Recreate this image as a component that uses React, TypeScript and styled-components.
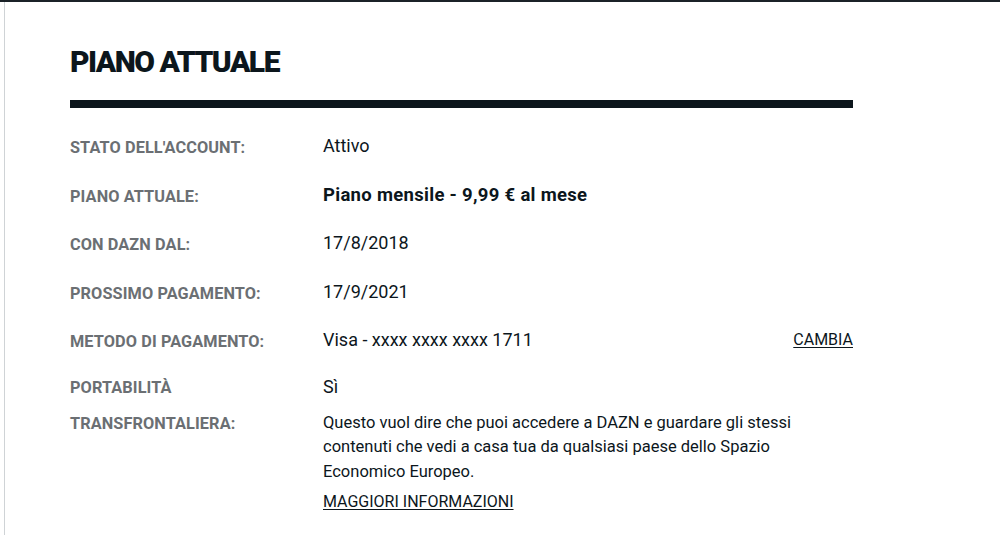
import styled, { createGlobalStyle } from 'styled-components'

const GlobalStyle = createGlobalStyle`
  html, body {
    margin: 0;
    padding: 0;
    background: #ffffff;
  }
  body {
    font-family: Roboto, 'Liberation Sans', sans-serif;
    color: #0c161c;
  }
`

interface Row {
  label: string
  value: string
  strong?: boolean
  action?: string
}

const rows: Row[] = [
  { label: "STATO DELL'ACCOUNT:", value: 'Attivo' },
  { label: 'PIANO ATTUALE:', value: 'Piano mensile - 9,99 € al mese', strong: true },
  { label: 'CON DAZN DAL:', value: '17/8/2018' },
  { label: 'PROSSIMO PAGAMENTO:', value: '17/9/2021' },
  { label: 'METODO DI PAGAMENTO:', value: 'Visa - xxxx xxxx xxxx 1711', action: 'CAMBIA' }
]

const App: React.FC = () => {
  return (
    <>
      <GlobalStyle />
      <Page>
        <Frame>
          <Section>
            <Title>PIANO ATTUALE</Title>
            <Divider />
            <Details>
              {rows.map((row) => (
                <DetailRow key={row.label}>
                  <Label>{row.label}</Label>
                  <Value strong={row.strong}>{row.value}</Value>
                  {row.action !== undefined && <Link href="#">{row.action}</Link>}
                </DetailRow>
              ))}
              <DetailRow>
                <Label tall>PORTABILITÀ<br />TRANSFRONTALIERA:</Label>
                <ValueBlock>
                  <Value>Sì</Value>
                  <Description>
                    Questo vuol dire che puoi accedere a DAZN e guardare gli stessi contenuti che vedi a casa tua da qualsiasi paese dello Spazio Economico Europeo.
                  </Description>
                  <MoreLink href="#">MAGGIORI INFORMAZIONI</MoreLink>
                </ValueBlock>
              </DetailRow>
            </Details>
          </Section>
        </Frame>
      </Page>
    </>
  )
}

const Page = styled.div`
  border-top: 2px solid #1b2228;
  height: 533px;
  overflow: hidden;
`

const Frame = styled.div`
  margin-left: 4px;
  border-left: 1px solid #cfd3d6;
  height: 100%;
`

const Section = styled.section`
  padding: 0 0 0 65px;
  width: 783px;
`

const Title = styled.h1`
  margin: 0;
  padding-top: 42px;
  font-family: Roboto, 'Liberation Sans', sans-serif;
  font-weight: 900;
  font-size: 30px;
  line-height: 36px;
  letter-spacing: -1.5px;
  color: #0c161c;
`

const Divider = styled.div`
  margin-top: 20px;
  height: 8px;
  background: #0c161c;
`

const Details = styled.div`
  display: flex;
  flex-direction: column;
  padding-top: 24px;
`

const DetailRow = styled.div`
  display: grid;
  grid-template-columns: 253px 1fr auto;
  align-items: start;
  min-height: 48.5px;
`

const Label = styled.div<{ tall?: boolean }>`
  font-family: Roboto, 'Liberation Sans', sans-serif;
  font-weight: 700;
  font-size: 16.3px;
  line-height: ${(props) => (props.tall ? '36px' : '28px')};
  margin-top: ${(props) => (props.tall ? '-5px' : '2px')};
  letter-spacing: 0.1px;
  color: #6b6f73;
`

const Value = styled.div<{ strong?: boolean }>`
  font-size: ${(props) => (props.strong ? '18.5px' : '18px')};
  font-weight: ${(props) => (props.strong ? 700 : 400)};
  letter-spacing: ${(props) => (props.strong ? '0.3px' : '0')};
  line-height: 28px;
  color: #0c161c;
`

const ValueBlock = styled.div`
  display: flex;
  flex-direction: column;
  align-items: flex-start;
  grid-column: 2 / 4;
  margin-top: -2px;
`

const Description = styled.p`
  margin: 10px 0 0;
  max-width: 500px;
  font-size: 16.5px;
  line-height: 24.5px;
  color: #0c161c;
`

const Link = styled.a`
  font-size: 16px;
  line-height: 28px;
  color: #0c161c;
  text-decoration: underline;
  text-underline-offset: 2px;
`

const MoreLink = styled(Link)`
  margin-top: 4px;
`

export default App
